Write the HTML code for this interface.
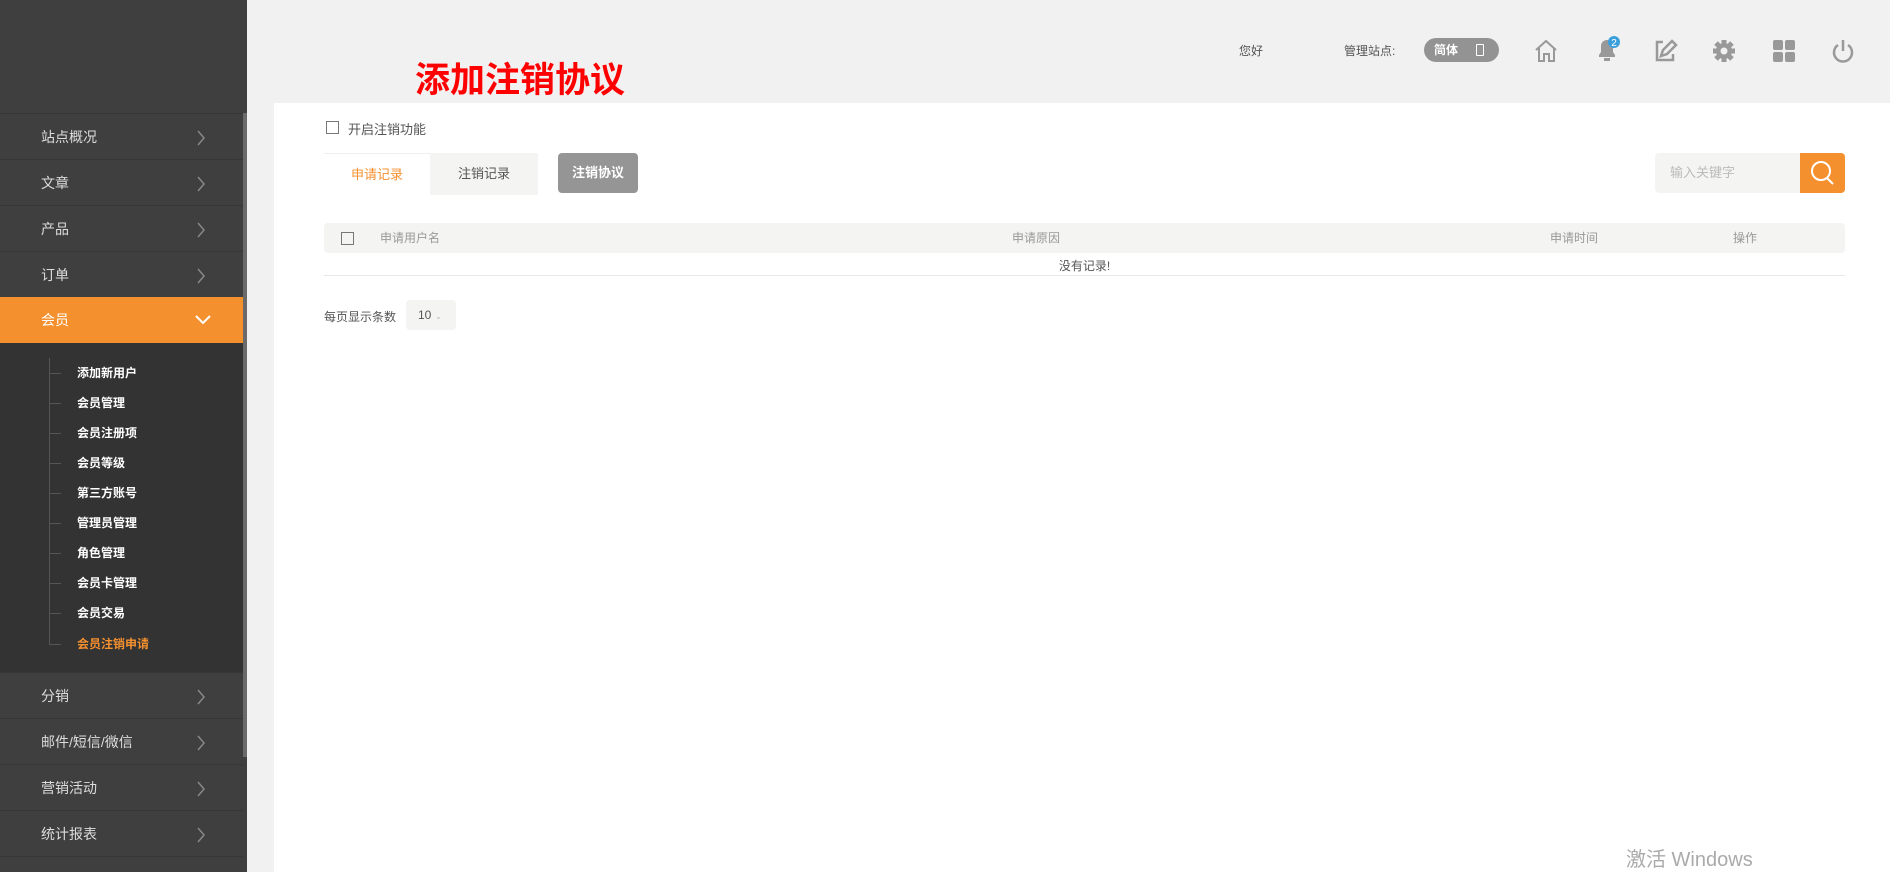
<!DOCTYPE html>
<html><head><meta charset="utf-8"><style>
*{margin:0;padding:0;box-sizing:border-box}
html,body{width:1890px;height:872px;overflow:hidden}
body{background:#f1f1f1;font-family:"Liberation Sans","Noto Sans CJK SC",sans-serif;position:relative}
.a{position:absolute}
#side{left:0;top:0;width:247px;height:872px;background:#3f3f3f;overflow:hidden}
.mi{position:absolute;left:0;width:243px;height:46px;border-top:1px solid #363636;color:#ddd;font-size:14px;line-height:46px;padding-left:41px}
.mi svg{position:absolute;left:196px;top:16px}
.sub{position:absolute;left:77px;font-size:12px;color:#fff;font-weight:bold}
.tick{position:absolute;left:49px;width:12px;height:1px;background:#555}
.ic{position:absolute;top:38px}
</style></head><body>
<div id="side" class="a">
<div class="mi" style="top:113px">站点概况<svg width="10" height="16"><path d="M2 1l6 7-6 7" stroke="#888" stroke-width="1.5" fill="none"/></svg></div>
<div class="mi" style="top:159px">文章<svg width="10" height="16"><path d="M2 1l6 7-6 7" stroke="#888" stroke-width="1.5" fill="none"/></svg></div>
<div class="mi" style="top:205px">产品<svg width="10" height="16"><path d="M2 1l6 7-6 7" stroke="#888" stroke-width="1.5" fill="none"/></svg></div>
<div class="mi" style="top:251px">订单<svg width="10" height="16"><path d="M2 1l6 7-6 7" stroke="#888" stroke-width="1.5" fill="none"/></svg></div>
<div class="mi" style="top:297px;background:#f5902f;color:#fff;border:none;width:247px">会员<svg width="18" height="12" style="left:194px;top:17px"><path d="M2 2l7 7 7-7" stroke="#fff" stroke-width="2" fill="none"/></svg></div>
<div class="a" style="left:0;top:343px;width:243px;height:329px;background:#333"></div>
<div class="a" style="left:49px;top:358px;width:1px;height:287px;background:#555"></div>
<div class="tick" style="top:373px"></div><div class="sub" style="top:364px">添加新用户</div>
<div class="tick" style="top:403px"></div><div class="sub" style="top:394px">会员管理</div>
<div class="tick" style="top:433px"></div><div class="sub" style="top:424px">会员注册项</div>
<div class="tick" style="top:463px"></div><div class="sub" style="top:454px">会员等级</div>
<div class="tick" style="top:493px"></div><div class="sub" style="top:484px">第三方账号</div>
<div class="tick" style="top:523px"></div><div class="sub" style="top:514px">管理员管理</div>
<div class="tick" style="top:553px"></div><div class="sub" style="top:544px">角色管理</div>
<div class="tick" style="top:583px"></div><div class="sub" style="top:574px">会员卡管理</div>
<div class="tick" style="top:613px"></div><div class="sub" style="top:604px">会员交易</div>
<div class="tick" style="top:644px"></div><div class="sub" style="top:635px;color:#f5902f">会员注销申请</div>
<div class="mi" style="top:672px">分销<svg width="10" height="16"><path d="M2 1l6 7-6 7" stroke="#888" stroke-width="1.5" fill="none"/></svg></div>
<div class="mi" style="top:718px">邮件/短信/微信<svg width="10" height="16"><path d="M2 1l6 7-6 7" stroke="#888" stroke-width="1.5" fill="none"/></svg></div>
<div class="mi" style="top:764px">营销活动<svg width="10" height="16"><path d="M2 1l6 7-6 7" stroke="#888" stroke-width="1.5" fill="none"/></svg></div>
<div class="mi" style="top:810px">统计报表<svg width="10" height="16"><path d="M2 1l6 7-6 7" stroke="#888" stroke-width="1.5" fill="none"/></svg></div>
<div class="mi" style="top:856px;height:16px"></div>
<div class="a" style="left:243px;top:113px;width:4px;height:644px;background:#6a6a6a"></div>
</div>

<div class="a" style="left:415px;top:52px;font-size:35px;font-weight:bold;color:#f00">添加注销协议</div>
<div class="a" style="left:1239px;top:42px;font-size:12px;color:#555">您好</div>
<div class="a" style="left:1344px;top:42px;font-size:12px;color:#555">管理站点:</div>
<div class="a" style="left:1424px;top:38px;width:75px;height:24px;border-radius:12px;background:#939393;color:#fff;font-size:12px;font-weight:bold;line-height:24px;padding-left:10px">简体<div class="a" style="left:52px;top:6px;width:8px;height:12px;border:1.5px solid #fff;border-radius:1px"></div></div>
<svg class="ic" style="left:1533px" width="26" height="26"><path d="M3 12L13 3l10 9M6 10v13h5v-7h5v7h5V10" stroke="#999" stroke-width="2" fill="none"/></svg>
<svg class="ic" style="left:1593px;top:34px" width="30" height="30"><path d="M6 23h16v-2l-2-3v-6a6 6 0 0 0-12 0v6l-2 3z" fill="#999"/><rect x="11" y="24" width="6" height="3" fill="#999"/><circle cx="21" cy="8" r="6" fill="#3b9fdc"/><text x="21" y="12" font-size="10" fill="#fff" text-anchor="middle" font-family="Liberation Sans">2</text></svg>
<svg class="ic" style="left:1652px" width="26" height="26"><path d="M11 4H5v18h16v-6" stroke="#999" stroke-width="2.5" fill="none"/><path d="M9 18l2-6 9-9 4 4-9 9z" stroke="#999" stroke-width="2.5" fill="none"/></svg>
<svg class="ic" style="left:1711px" width="26" height="26"><circle cx="13" cy="13" r="8" fill="#999"/><path d="M13 2v22M2 13h22M5 5l16 16M21 5L5 21" stroke="#999" stroke-width="5"/><circle cx="13" cy="13" r="3.5" fill="#f1f1f1"/></svg>
<svg class="ic" style="left:1771px" width="26" height="26"><rect x="2" y="2" width="10" height="10" rx="2" fill="#999"/><rect x="14" y="2" width="10" height="10" rx="2" fill="#999"/><rect x="2" y="14" width="10" height="10" rx="2" fill="#999"/><rect x="14" y="14" width="10" height="10" rx="2" fill="#999"/></svg>
<svg class="ic" style="left:1830px" width="26" height="26"><path d="M8 7a9 9 0 1 0 10 0" stroke="#999" stroke-width="2.5" fill="none"/><path d="M13 2v11" stroke="#999" stroke-width="2.5"/></svg>

<div class="a" style="left:274px;top:103px;width:1616px;height:769px;background:#fff"></div>
<div class="a" style="left:326px;top:121px;width:13px;height:13px;border:1px solid #777"></div>
<div class="a" style="left:348px;top:119px;font-size:13px;color:#555">开启注销功能</div>
<div class="a" style="left:324px;top:153px;width:106px;height:42px;border-top:1px solid #eee;color:#f5902f;font-size:13px;text-align:center;line-height:42px">申请记录</div>
<div class="a" style="left:430px;top:153px;width:108px;height:42px;background:#f4f4f2;color:#555;font-size:13px;text-align:center;line-height:42px">注销记录</div>
<div class="a" style="left:558px;top:153px;width:80px;height:40px;background:#959595;border-radius:4px;color:#fff;font-weight:bold;font-size:13px;text-align:center;line-height:40px">注销协议</div>
<div class="a" style="left:1655px;top:153px;width:190px;height:40px;background:#f4f4f2;border-radius:4px;color:#bbb;font-size:13px;line-height:40px;padding-left:15px">输入关键字</div>
<div class="a" style="left:1800px;top:153px;width:45px;height:40px;background:#f5902f;border-radius:0 4px 4px 0"><svg width="45" height="40"><circle cx="21" cy="18" r="9" stroke="#fff" stroke-width="2" fill="none"/><path d="M27 25l6 6" stroke="#fff" stroke-width="2"/></svg></div>
<div class="a" style="left:324px;top:223px;width:1521px;height:30px;background:#f4f4f2;border-radius:4px;font-size:12px;color:#999;line-height:30px">
<div class="a" style="left:17px;top:9px;width:13px;height:13px;border:1px solid #777"></div>
<span class="a" style="left:56px">申请用户名</span><span class="a" style="left:688px">申请原因</span><span class="a" style="left:1226px">申请时间</span><span class="a" style="left:1409px">操作</span></div>
<div class="a" style="left:324px;top:257px;width:1521px;text-align:center;font-size:12px;color:#555">没有记录!</div>
<div class="a" style="left:324px;top:275px;width:1521px;height:1px;background:#e8e8e8"></div>
<div class="a" style="left:324px;top:308px;font-size:12px;color:#555">每页显示条数</div>
<div class="a" style="left:406px;top:300px;width:50px;height:30px;background:#f4f4f2;border-radius:4px;font-size:12px;color:#555;line-height:30px;padding-left:12px">10 <span style="color:#bbb;font-size:9px">&#8964;</span></div>
<div class="a" style="left:1626px;top:843px;font-size:20px;color:#aaa">激活 Windows</div>
</body></html>
